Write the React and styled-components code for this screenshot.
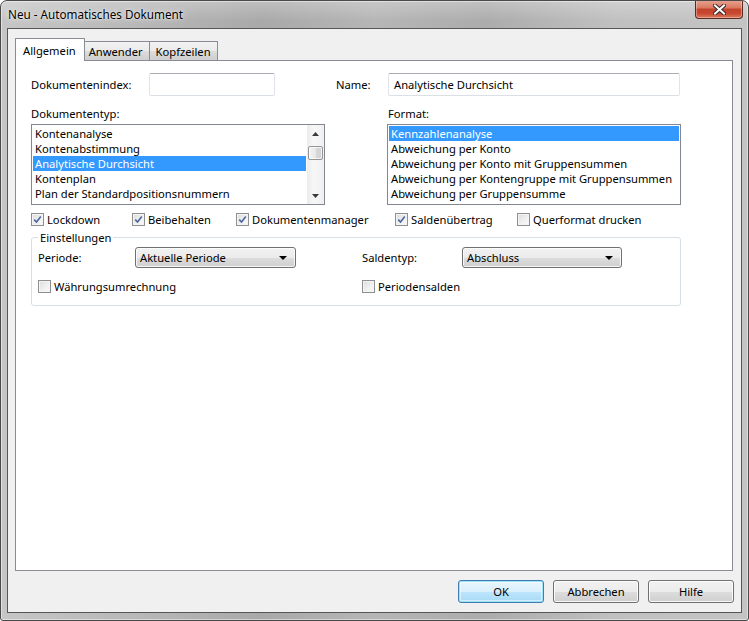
import React from 'react';
import styled, { createGlobalStyle, css } from 'styled-components';

const Global = createGlobalStyle`
  html, body { margin: 0; padding: 0; background: #ffffff; }
  body { font-family: "Noto Sans", "Open Sans", sans-serif; font-size: 11.2px; color: #000; }
  * { box-sizing: border-box; }
`;

const Window = styled.div`
  width: 749px;
  height: 621px;
  border: 1px solid #4a4a4a;
  border-radius: 7px 7px 3px 3px;
  background:
    linear-gradient(180deg, rgba(255,255,255,0.25) 0px, rgba(255,255,255,0) 20px),
    linear-gradient(90deg, #c6c6c6 0%, #b8b8b8 18%, #a9a9a9 35%, #b6b6b6 50%, #acacac 65%, #c0c0c0 82%, #c4c4c4 100%);
  display: flex;
  flex-direction: column;
  padding: 0 6px 7px 6px;
  overflow: hidden;
  box-shadow: inset 0 0 0 1px rgba(255,255,255,0.45);
`;

const TitleBar = styled.div`
  height: 27px;
  display: flex;
  align-items: flex-start;
  justify-content: space-between;
`;

const Title = styled.div`
  padding: 5px 0 0 1px;
  font-size: 11.7px;
  color: #000;
  text-shadow: 0 0 6px rgba(255,255,255,0.9), 0 0 2px rgba(255,255,255,0.9);
`;

const CloseBtn = styled.div`
  width: 48px;
  height: 19px;
  margin-top: -1px;
  margin-right: -1px;
  border: 1px solid #5a2a22;
  border-top: none;
  border-radius: 0 0 4px 4px;
  background: linear-gradient(180deg, #e8a493 0%, #d9785f 45%, #c3432a 50%, #c8492f 75%, #dc7a5c 100%);
  display: flex;
  align-items: center;
  justify-content: center;
  box-shadow: inset 0 0 0 1px rgba(255,255,255,0.35);
`;

const Client = styled.div`
  flex: 1;
  border: 1px solid #565656;
  background: #f0f0f0;
  display: flex;
  flex-direction: column;
  padding: 9px 8px 8px 7px;
`;

const TabStrip = styled.div`
  display: flex;
  height: 22px;
  align-items: flex-end;
  position: relative;
  z-index: 1;
`;

const Tab = styled.div`
  height: 19px;
  border: 1px solid #898c95;
  border-bottom: none;
  background: linear-gradient(180deg, #f2f2f2 0%, #ebebeb 50%, #dddddd 51%, #cfcfcf 100%);
  padding: 0 6px;
  display: flex;
  align-items: center;
  margin-left: -1px;
  ${p => p.$active && css`
    height: 23px;
    margin-bottom: -1px;
    background: #ffffff;
    margin-left: 0;
    margin-right: -2px;
    padding: 4px 8px 0 7px;
    position: relative;
    z-index: 2;
    align-items: flex-start;
  `}
`;

const Panel = styled.div`
  height: 511px;
  border: 1px solid #898c95;
  background: #ffffff;
  padding: 12px 15px 0 15px;
  display: flex;
  flex-direction: column;
`;

const TopRow = styled.div`
  display: grid;
  grid-template-columns: 118px 126px 61px 52px 292px;
  height: 23px;
  align-items: center;
`;

const Label = styled.div`
  white-space: nowrap;
`;

const TextBox = styled.div`
  height: 23px;
  border: 1px solid #dbdfe6;
  border-top-color: #abadb3;
  border-left-color: #e2e3ea;
  border-right-color: #e2e3ea;
  border-radius: 2px;
  background: #fff;
  padding: 0 5px;
  display: flex;
  align-items: center;
  white-space: nowrap;
`;

const ListGrid = styled.div`
  display: grid;
  grid-template-columns: 294px 294px;
  column-gap: 62px;
  margin-top: 10px;
`;

const ListCol = styled.div`
  display: flex;
  flex-direction: column;
  gap: 3px;
`;

const ListLabel = styled.div`
  height: 15px;
  line-height: 15px;
  padding-left: ${p => p.$pl || 0}px;
`;

const ListBox = styled.div`
  height: 81px;
  border: 1px solid #828790;
  background: #fff;
  display: flex;
`;

const Items = styled.div`
  flex: 1;
  padding-top: 1px;
  min-width: 0;
`;

const Item = styled.div`
  height: 15px;
  line-height: 15px;
  margin: 0 1px;
  padding-left: 2px;
  white-space: nowrap;
  overflow: hidden;
  ${p => p.$sel && css`
    background: #3399ff;
    color: #fff;
  `}
`;

const ScrollBar = styled.div`
  width: 17px;
  background: linear-gradient(90deg, #ececec 0%, #f7f7f7 40%, #f0f0f0 100%);
  display: flex;
  flex-direction: column;
  align-items: center;
`;

const ScrollArrow = styled.div`
  height: 17px;
  display: flex;
  align-items: center;
  justify-content: center;
`;

const Thumb = styled.div`
  width: 15px;
  height: 14px;
  margin-top: 4px;
  border: 1px solid #959595;
  border-radius: 2px;
  background: linear-gradient(90deg, #f3f3f3 0%, #e8e8e8 50%, #d8d8d8 51%, #d2d2d2 100%);
  box-shadow: inset 0 0 0 1px rgba(255,255,255,0.7);
`;

const ScrollSpacer = styled.div`
  flex: 1;
`;

const CheckRow = styled.div`
  display: grid;
  grid-template-columns: 101px 104px 159px 122px auto;
  margin-top: 7px;
  height: 15px;
  align-items: center;
`;

const CheckItem = styled.label`
  display: flex;
  align-items: center;
  gap: 3px;
  white-space: nowrap;
  height: 15px;
`;

const Box = styled.span`
  width: 13px;
  height: 13px;
  border: 1px solid #8e8f8f;
  background: linear-gradient(135deg, #dcdcdc 0%, #eeeeee 50%, #fbfbfb 100%);
  box-shadow: inset 0 0 0 1px #f4f4f4;
  display: flex;
  align-items: center;
  justify-content: center;
  flex: none;
`;

const Group = styled.fieldset`
  margin: 3px 0 0 0;
  width: 650px;
  border: 1px solid #d5dfe5;
  border-radius: 3px;
  padding: 2px 6px 11px 6px;
  min-width: 0;
`;

const Legend = styled.legend`
  padding: 0 2px;
  line-height: 15px;
  height: 15px;
`;

const GroupGrid = styled.div`
  display: grid;
  grid-template-columns: 97px 161px 66px 100px 160px;
  grid-template-rows: 21px 15px;
  row-gap: 11px;
  align-items: center;
`;

const Combo = styled.div`
  height: 21px;
  border: 1px solid #707070;
  border-radius: 3px;
  background: linear-gradient(180deg, #f2f2f2 0%, #ebebeb 50%, #dddddd 51%, #cfcfcf 100%);
  box-shadow: inset 0 0 0 1px rgba(255,255,255,0.8);
  display: flex;
  align-items: center;
  justify-content: space-between;
  padding: 0 8px 0 4px;
  white-space: nowrap;
`;

const SpanCheck = styled.div`
  grid-column: ${p => p.$col};
`;

const Spacer = styled.div`
  flex: 1;
`;

const ButtonRow = styled.div`
  display: flex;
  justify-content: flex-end;
  gap: 9px;
  margin-top: 9px;
  margin-right: -1px;
`;

const Button = styled.div`
  width: 86px;
  height: 23px;
  border: 1px solid #707070;
  border-radius: 3px;
  background: linear-gradient(180deg, #f2f2f2 0%, #ebebeb 50%, #dddddd 51%, #cfcfcf 100%);
  box-shadow: inset 0 0 0 1px rgba(255,255,255,0.85);
  display: flex;
  align-items: center;
  justify-content: center;
  ${p => p.$default && css`
    border-color: #3c7fb1;
    background: linear-gradient(180deg, #eaf6fd 0%, #d9f0fc 50%, #bee6fd 51%, #a7d9f5 100%);
    box-shadow: inset 0 0 0 1px #9ee0fb, inset 0 0 0 2px rgba(255,255,255,0.5);
  `}
`;

const CheckMark = () => (
  <svg width="9" height="9" viewBox="0 0 9 9">
    <path d="M1.2 4.6 L3.5 7 L7.8 1.4" fill="none" stroke="#4e67a0" strokeWidth="1.6" strokeLinejoin="miter" />
  </svg>
);

const Check = ({ checked, label }) => (
  <CheckItem>
    <Box>{checked && <CheckMark />}</Box>
    <span>{label}</span>
  </CheckItem>
);

const Arrow = ({ up, color = '#3a3a3a', w = 7, h = 4 }) => (
  <svg width={w} height={h} viewBox={`0 0 ${w} ${h}`}>
    {up
      ? <polygon points={`0,${h} ${w},${h} ${w / 2},0`} fill={color} />
      : <polygon points={`0,0 ${w},0 ${w / 2},${h}`} fill={color} />}
  </svg>
);

const typeItems = ['Kontenanalyse', 'Kontenabstimmung', 'Analytische Durchsicht', 'Kontenplan', 'Plan der Standardpositionsnummern'];
const formatItems = ['Kennzahlenanalyse', 'Abweichung per Konto', 'Abweichung per Konto mit Gruppensummen', 'Abweichung per Kontengruppe mit Gruppensummen', 'Abweichung per Gruppensumme'];

export default function App() {
  return (
    <>
      <Global />
      <Window>
        <TitleBar>
          <Title>Neu - Automatisches Dokument</Title>
          <CloseBtn>
            <svg width="13" height="11" viewBox="0 0 13 11">
              <path d="M2 1.5 L11 9.5 M11 1.5 L2 9.5" stroke="#3b2b2b" strokeWidth="4" strokeLinecap="square" />
              <path d="M2 1.5 L11 9.5 M11 1.5 L2 9.5" stroke="#ffffff" strokeWidth="2" strokeLinecap="square" />
            </svg>
          </CloseBtn>
        </TitleBar>
        <Client>
          <TabStrip>
            <Tab $active>Allgemein</Tab>
            <Tab>Anwender</Tab>
            <Tab>Kopfzeilen</Tab>
          </TabStrip>
          <Panel>
            <TopRow>
              <Label>Dokumentenindex:</Label>
              <TextBox />
              <span />
              <Label>Name:</Label>
              <TextBox>Analytische Durchsicht</TextBox>
            </TopRow>
            <ListGrid>
              <ListCol>
                <ListLabel>Dokumententyp:</ListLabel>
                <ListBox>
                  <Items>
                    {typeItems.map((t, i) => <Item key={t} $sel={i === 2}>{t}</Item>)}
                  </Items>
                  <ScrollBar>
                    <ScrollArrow><Arrow up /></ScrollArrow>
                    <Thumb />
                    <ScrollSpacer />
                    <ScrollArrow><Arrow /></ScrollArrow>
                  </ScrollBar>
                </ListBox>
              </ListCol>
              <ListCol>
                <ListLabel $pl={1}>Format:</ListLabel>
                <ListBox>
                  <Items>
                    {formatItems.map((t, i) => <Item key={t} $sel={i === 0}>{t}</Item>)}
                  </Items>
                </ListBox>
              </ListCol>
            </ListGrid>
            <CheckRow>
              <Check checked label="Lockdown" />
              <Check checked label="Beibehalten" />
              <Check checked label="Dokumentenmanager" />
              <Check checked label="Saldenübertrag" />
              <Check label="Querformat drucken" />
            </CheckRow>
            <Group>
              <Legend>Einstellungen</Legend>
              <GroupGrid>
                <Label>Periode:</Label>
                <Combo>
                  <span>Aktuelle Periode</span>
                  <Arrow color="#000" w={8} h={4} />
                </Combo>
                <span />
                <Label>Saldentyp:</Label>
                <Combo>
                  <span>Abschluss</span>
                  <Arrow color="#000" w={8} h={4} />
                </Combo>
                <SpanCheck $col="1 / 4"><Check label="Währungsumrechnung" /></SpanCheck>
                <SpanCheck $col="4 / 6"><Check label="Periodensalden" /></SpanCheck>
              </GroupGrid>
            </Group>
            <Spacer />
          </Panel>
          <ButtonRow>
            <Button $default>OK</Button>
            <Button>Abbrechen</Button>
            <Button>Hilfe</Button>
          </ButtonRow>
        </Client>
      </Window>
    </>
  );
}
